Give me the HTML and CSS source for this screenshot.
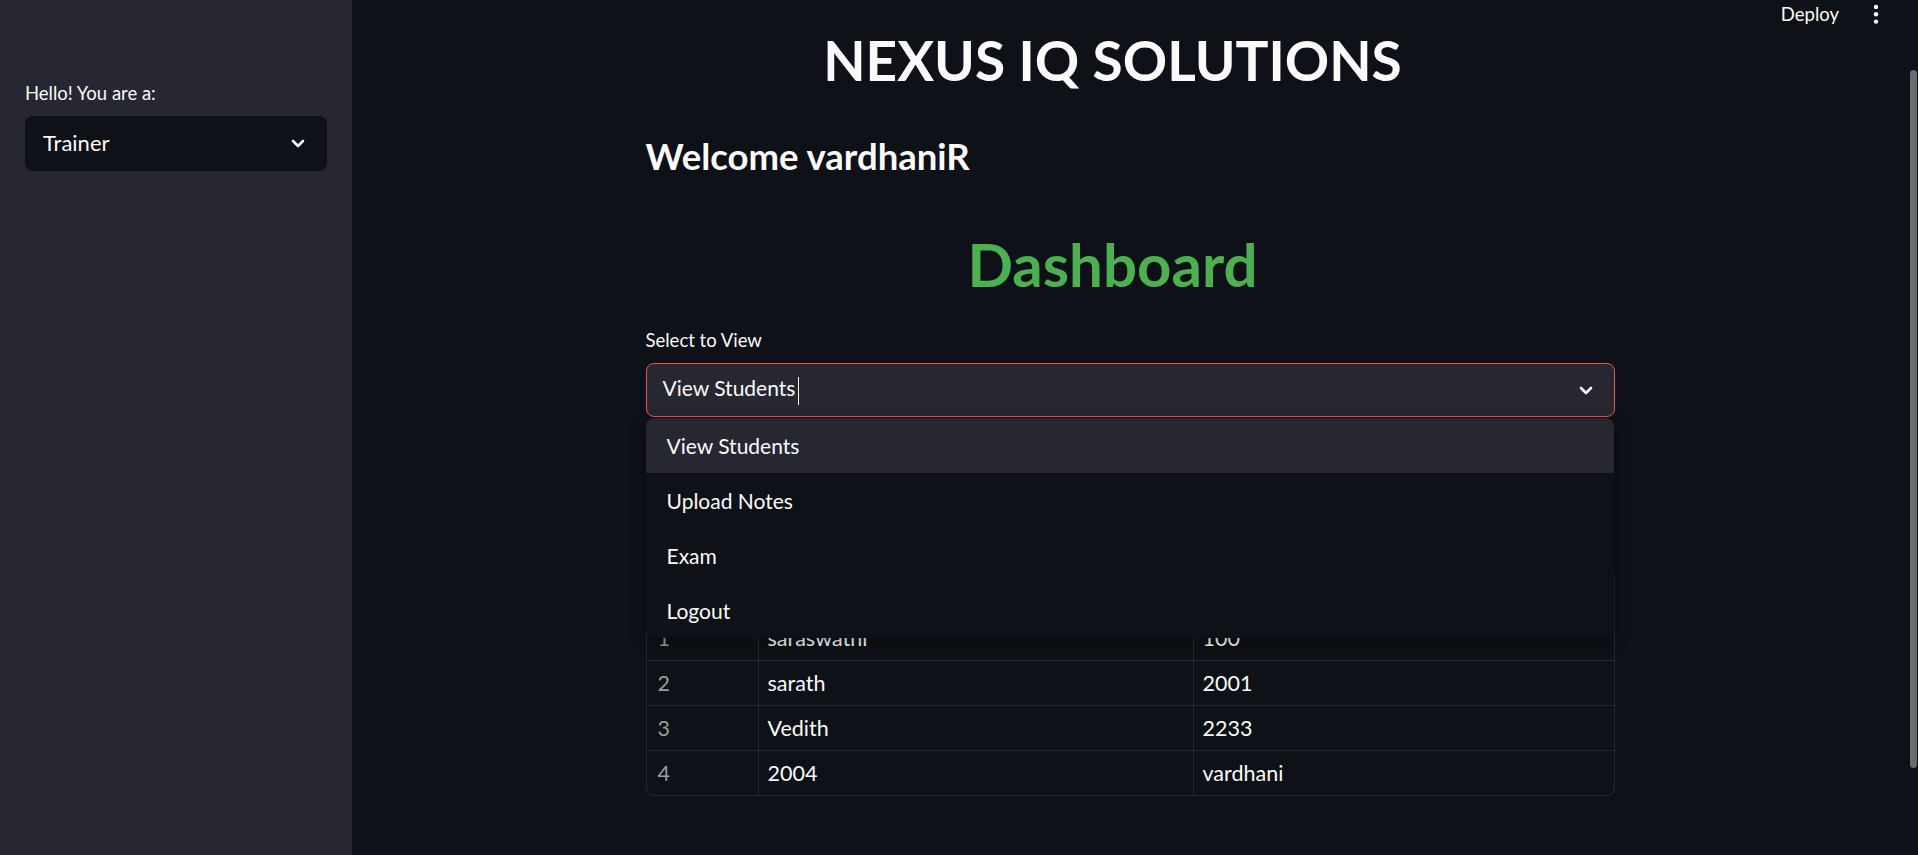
FILE: index.html
```html
<!DOCTYPE html>
<html lang="en">
<head>
<meta charset="utf-8">
<title>NEXUS IQ SOLUTIONS</title>
<link rel="stylesheet" href="styles.css">
</head>
<body>
<div class="app">
  <aside class="sidebar">
    <div class="label">Hello! You are a:</div>
    <div class="select side-select">
      <span class="select-value">Trainer</span>
      <svg class="chev" width="14" height="9" viewBox="0 0 14 9"><path d="M2 2 L7 7 L12 2" fill="none" stroke="#fafafa" stroke-width="2.6" stroke-linecap="round" stroke-linejoin="round"/></svg>
    </div>
  </aside>
  <main class="main">
    <div class="block">
      <h1 class="title">NEXUS IQ SOLUTIONS</h1>
      <h3 class="welcome">Welcome vardhaniR</h3>
      <h1 class="title dash">Dashboard</h1>
      <div class="label main-label">Select to View</div>
      <div class="select-wrap">
        <div class="select main-select">
          <span class="select-value">View Students<span class="caret"></span></span>
          <svg class="chev" width="14" height="9" viewBox="0 0 14 9"><path d="M2 2 L7 7 L12 2" fill="none" stroke="#fafafa" stroke-width="2.6" stroke-linecap="round" stroke-linejoin="round"/></svg>
        </div>
        <ul class="menu">
          <li class="item active">View Students</li>
          <li class="item">Upload Notes</li>
          <li class="item">Exam</li>
          <li class="item">Logout</li>
        </ul>
      </div>
      <div class="table">
        <div class="row head">
          <div class="cell idx"></div>
          <div class="cell hcell">username</div>
          <div class="cell hcell">password</div>
        </div>
        <div class="row">
          <div class="cell idx">1</div>
          <div class="cell">saraswathi</div>
          <div class="cell">100</div>
        </div>
        <div class="row">
          <div class="cell idx">2</div>
          <div class="cell">sarath</div>
          <div class="cell">2001</div>
        </div>
        <div class="row">
          <div class="cell idx">3</div>
          <div class="cell">Vedith</div>
          <div class="cell">2233</div>
        </div>
        <div class="row">
          <div class="cell idx">4</div>
          <div class="cell">2004</div>
          <div class="cell">vardhani</div>
        </div>
      </div>
    </div>
  </main>
  <div class="scroll"><div class="thumb"></div></div>
</div>
<header class="topbar">
  <span class="deploy">Deploy</span>
  <svg class="dots" width="6" height="22" viewBox="0 0 6 22"><circle cx="3" cy="3" r="2.2" fill="#fafafa"/><circle cx="3" cy="10.3" r="2.2" fill="#fafafa"/><circle cx="3" cy="17.6" r="2.2" fill="#fafafa"/></svg>
</header>
</body>
</html>
```

FILE: styles.css
```css
html, body {
  margin: 0;
  padding: 0;
}
body {
  background: #0e1117;
  color: #fafafa;
  font-family: Lato, "Noto Sans", "Liberation Sans", sans-serif;
  height: 855px;
  overflow: hidden;
  position: relative;
}
.app {
  display: flex;
  height: 855px;
}
.sidebar {
  width: 352px;
  flex: none;
  background: #262730;
  box-sizing: border-box;
  padding: 82px 25px 0 25px;
}
.label {
  font-size: 18.5px;
  line-height: 22.8px;
}
.select {
  display: flex;
  align-items: center;
  justify-content: space-between;
  box-sizing: border-box;
  border-radius: 8px;
  font-size: 21px;
  line-height: 26.4px;
}
.side-select {
  margin-top: 11px;
  height: 55px;
  background: #0e1117;
  padding: 0 22px 0 18px;
}
.side-select .select-value {
  font-size: 22px;
}
.chev {
  display: block;
  flex: none;
}
.main {
  flex: 1;
  min-width: 0;
}
.block {
  width: 969px;
  margin: 0 auto;
  padding-top: 26px;
}
.title {
  margin: 0;
  font-size: 55px;
  font-weight: 700;
  line-height: 68.4px;
  text-align: center;
  padding-right: 35px;
}
.welcome {
  margin: 40px 0 0 0;
  font-size: 36.5px;
  font-weight: 700;
  line-height: 44.4px;
}
.dash {
  margin-top: 51px;
  font-size: 60px;
  color: #4caf50;
}
.main-label {
  margin-top: 31px;
}
.select-wrap {
  position: relative;
  margin-top: 11px;
}
.main-select {
  height: 54px;
  border: 1px solid #ff4b4b;
  background: #262730;
  padding: 0 21px 0 16px;
}
.caret {
  display: inline-block;
  width: 1px;
  height: 28px;
  background: #fafafa;
  margin-left: 3px;
  vertical-align: middle;
}
.menu {
  position: absolute;
  top: calc(100% + 1px);
  left: 0;
  right: 1px;
  margin: 0;
  padding: 0;
  list-style: none;
  background: #0e1117;
  border-radius: 8px;
  overflow: hidden;
  box-shadow: 0 4px 16px rgba(0, 0, 0, 0.35);
  z-index: 2;
}
.item {
  height: 55px;
  display: flex;
  align-items: center;
  padding-left: 21px;
  font-size: 21px;
}
.item.active {
  background: #262730;
}
.table {
  margin-top: 153px;
  border: 1px solid rgba(250, 250, 250, 0.1);
  border-radius: 8px;
  overflow: hidden;
}
.row {
  display: grid;
  grid-template-columns: 111px 435px 1fr;
  height: 45px;
  box-sizing: border-box;
  border-top: 1px solid rgba(250, 250, 250, 0.1);
}
.row.head {
  height: 44px;
  border-top: none;
}
.cell {
  font-size: 21.5px;
  line-height: 44px;
  padding-left: 9px;
  border-left: 1px solid rgba(250, 250, 250, 0.1);
  white-space: nowrap;
}
.cell.idx {
  border-left: none;
  padding-left: 11px;
  color: rgba(250, 250, 250, 0.6);
}
.hcell {
  color: rgba(250, 250, 250, 0.6);
}
.scroll {
  width: 10px;
  flex: none;
}
.thumb {
  margin: 70px 0 0 2px;
  width: 7px;
  height: 698px;
  border-radius: 4px;
  background: #6b6c72;
}
.topbar {
  position: absolute;
  top: 3px;
  right: 39px;
  display: flex;
  align-items: flex-start;
  gap: 34px;
}
.deploy {
  font-size: 18.5px;
  line-height: 22.8px;
}
.dots {
  display: block;
  margin-top: 1px;
}
```
